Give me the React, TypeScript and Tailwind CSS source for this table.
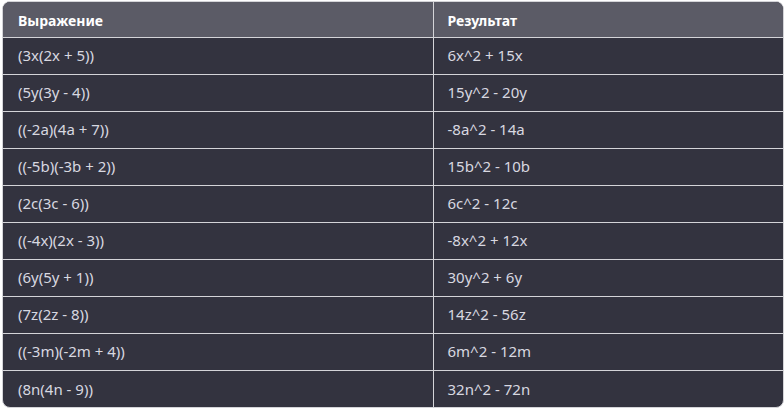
import React from "react";

const rows: [string, string][] = [
  ["(3x(2x + 5))", "6x^2 + 15x"],
  ["(5y(3y - 4))", "15y^2 - 20y"],
  ["((-2a)(4a + 7))", "-8a^2 - 14a"],
  ["((-5b)(-3b + 2))", "15b^2 - 10b"],
  ["(2c(3c - 6))", "6c^2 - 12c"],
  ["((-4x)(2x - 3))", "-8x^2 + 12x"],
  ["(6y(5y + 1))", "30y^2 + 6y"],
  ["(7z(2z - 8))", "14z^2 - 56z"],
  ["((-3m)(-2m + 4))", "6m^2 - 12m"],
  ["(8n(4n - 9))", "32n^2 - 72n"],
];

export default function App() {
  return (
    <div className="w-[784px] h-[408px] bg-white overflow-hidden pl-[2px] pt-[1px]">
      <div
        className="w-[782px] rounded-lg border border-[#d4d4d8] overflow-hidden bg-[#33333f]"
        style={{ fontFamily: '"Noto Sans", "Open Sans", sans-serif' }}
      >
        <table className="w-full border-collapse">
          <thead>
            <tr className="bg-[#5b5b66] h-[35px]">
              <th className="w-[430px] text-left text-[14px] font-bold text-white pl-[15px] pt-[2px] border-r border-[#d4d4d8]">
                Выражение
              </th>
              <th className="text-left text-[14px] font-bold text-white pl-[14px] pt-[2px]">Результат</th>
            </tr>
          </thead>
          <tbody>
            {rows.map(([a, b]) => (
              <tr key={a} className="h-[37px] border-t border-[#d4d4d8] text-[15px]">
                <td className="pl-[15px] text-[#d8d8e0] border-r border-[#d4d4d8]">{a}</td>
                <td className="pl-[14px] text-[#d8d8e0]">{b}</td>
              </tr>
            ))}
          </tbody>
        </table>
      </div>
    </div>
  );
}
